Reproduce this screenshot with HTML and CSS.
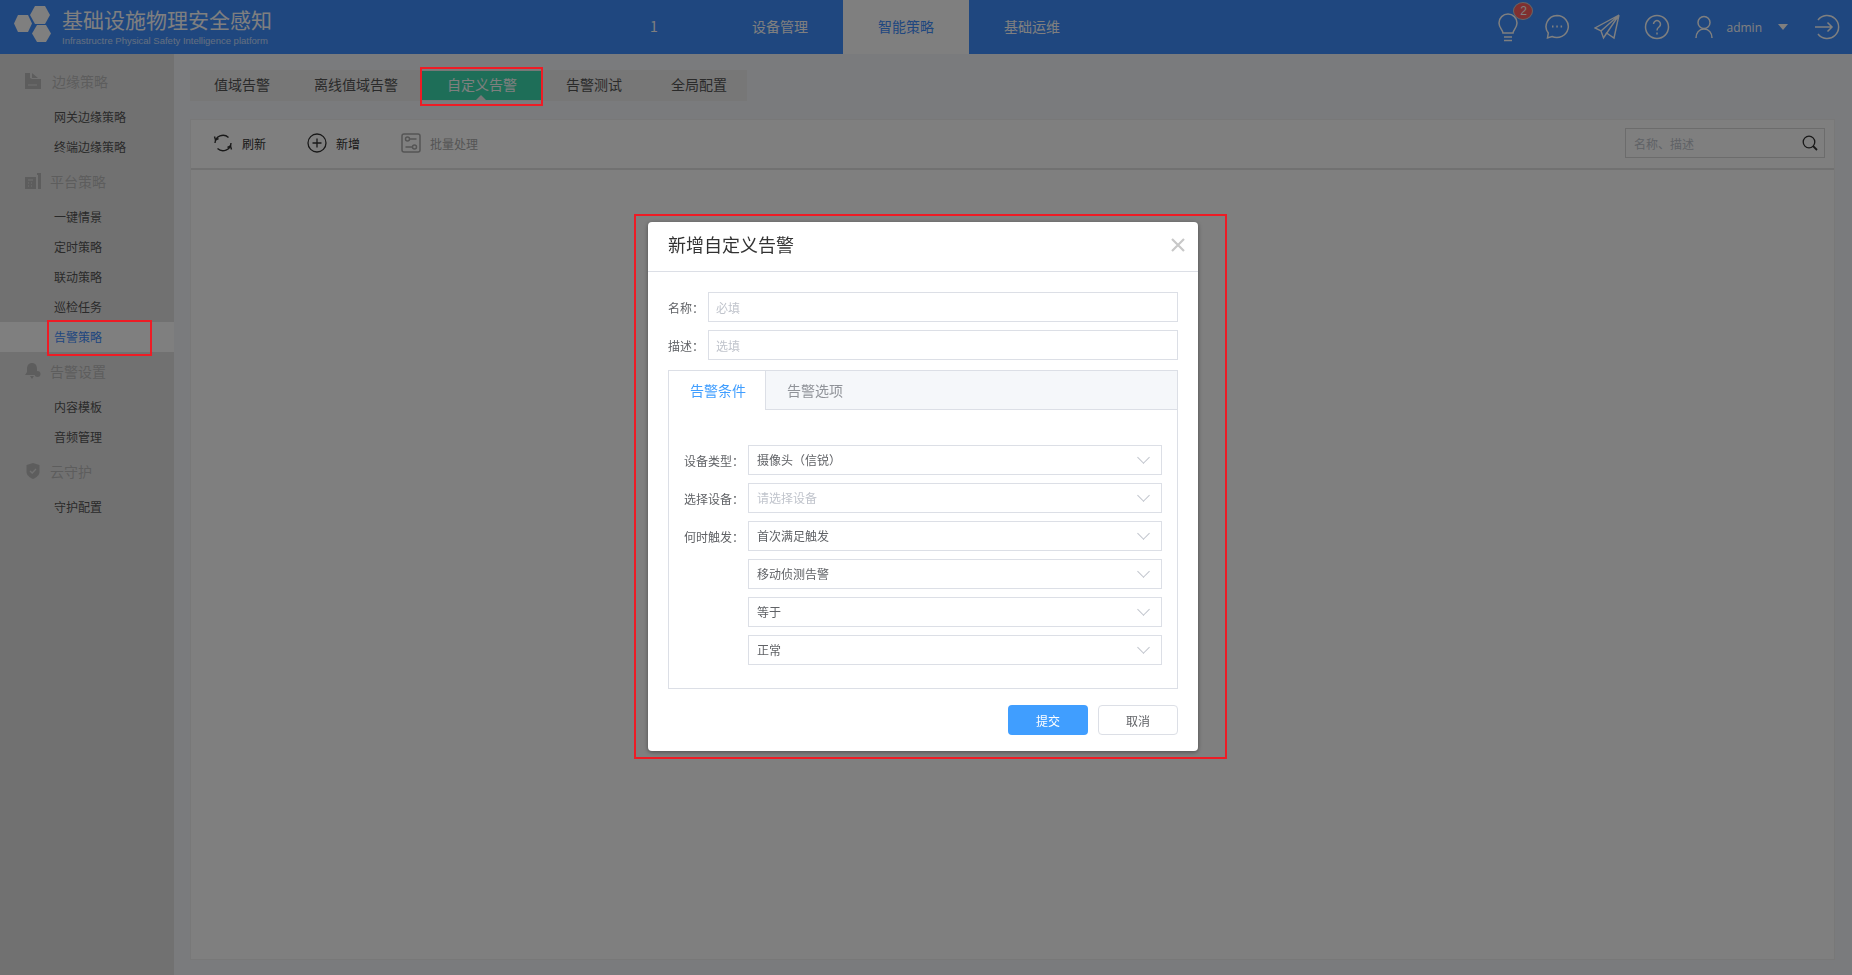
FILE: index.html
```html
<!DOCTYPE html>
<html lang="zh-CN">

    <head>
        <meta charset="UTF-8">
        <title>基础设施物理安全感知</title>
        <link rel="stylesheet" href="styles.css">
    </head>

    <body>
        <header class="top-bar">
            <div class="brand">
                <svg class="brand-logo" width="40" height="40" viewBox="0 0 40 40">
                    <path d="M22 2h10l5 9-5 9H22l-5-9z" fill="#fff"/>
                    <path d="M5 11h10l4 8.500-4 8.500H5l-4-8.500z" fill="#fff"/>
                    <path d="M24 21h9l5 8.500-5 8.500h-9l-5-8.500z" fill="#fff"/>
                </svg>
                <div>
                    <div class="brand-title">基础设施物理安全感知</div>
                    <div class="brand-sub">Infrastructre Physical Safety Intelligence platform</div>
                </div>
            </div>
            <nav class="main-nav">
                <a>1</a>
                <a>设备管理</a>
                <a class="active">智能策略</a>
                <a>基础运维</a>
            </nav>
            <div class="top-tools">
                <span class="tool tool-bulb">
                    <svg width="24" height="30" viewBox="0 0 24 30" fill="none" stroke="#fff" stroke-width="1.5">
                        <path d="M7 21c0-3-4-5-4-10a9 9 0 0 1 18 0c0 5-4 7-4 10z"/>
                        <path d="M8 25h8M8 28.500h8"/>
                    </svg>
                    <b class="badge">2</b>
                </span>
                <span class="tool">
                    <svg width="26" height="26" viewBox="0 0 26 26" fill="none" stroke="#fff" stroke-width="1.500">
                        <path d="M13 1.500a11.500 11 0 1 1-5 21l-4.500 1.500 .8-5A11.500 11 0 0 1 13 1.500z"/>
                        <path d="M8 12.500h1.500M12.300 12.500h1.500M16.600 12.500h1.500" stroke-width="2"/>
                    </svg>
                </span>
                <span class="tool">
                    <svg width="26" height="26" viewBox="0 0 26 26" fill="none" stroke="#fff" stroke-width="1.400">
                        <path d="M25 1L1 14l6 3zM25 1L7 17l2.500 7zM25 1l-5 23-7.500-5-3 5"/>
                    </svg>
                </span>
                <span class="tool">
                    <svg width="26" height="26" viewBox="0 0 26 26" fill="none" stroke="#fff" stroke-width="1.500">
                        <circle cx="13" cy="13" r="11.500"/>
                        <path d="M9.500 10a3.500 3.500 0 1 1 5.500 3c-1.400 1-2 1.500-2 3.500"/>
                        <path d="M13 18.500v2"/>
                    </svg>
                </span>
                <span class="tool tool-user">
                    <svg width="18" height="24" viewBox="0 0 18 24" fill="none" stroke="#fff" stroke-width="1.500">
                        <circle cx="9" cy="7.500" r="6"/>
                        <path d="M1 23c0-5 3-9 8-9s8 4 8 9"/>
                    </svg>
                </span>
                <span class="user-name">admin</span>
                <i class="user-caret"></i>
                <span class="tool tool-logout">
                    <svg width="26" height="26" viewBox="0 0 26 26" fill="none" stroke="#fff" stroke-width="1.500">
                        <path d="M3 6a11.500 11.500 0 1 1 0 14"/>
                        <path d="M0 13h17M12.500 8.500L17 13l-4.500 4.500"/>
                    </svg>
                </span>
            </div>
        </header>

        <div class="layout">
            <aside class="side-menu">
                <div class="menu-group">
                    <svg width="16" height="16" viewBox="0 0 16 16"><path d="M0 0h5v5l2 1h9v10H0zM7 0l6 5H7z" fill="#bbb"/><path d="M3 12h9" stroke="#e3e3e3"/></svg>
                    <span class="first-group">边缘策略</span>
                </div>
                <a class="menu-item">网关边缘策略</a>
                <a class="menu-item">终端边缘策略</a>
                <div class="menu-group">
                    <svg width="16" height="16" viewBox="0 0 16 16"><path d="M0 4h11v12H0z" fill="#bbb"/><path d="M12 2V0h4v16h-3V2z" fill="#bbb"/><path d="M3 7h5M3 10h1M6 10h1M3 13h1M6 13h1" stroke="#e3e3e3"/></svg>
                    <span>平台策略</span>
                </div>
                <a class="menu-item">一键情景</a>
                <a class="menu-item">定时策略</a>
                <a class="menu-item">联动策略</a>
                <a class="menu-item">巡检任务</a>
                <a class="menu-item active">告警策略</a>
                <div class="menu-group">
                    <svg width="16" height="16" viewBox="0 0 16 16"><path d="M7 0c3 0 5 2 5 6v3l2 3H0l2-3V6c0-4 2-6 5-6zM5 13h4l-2 3z" fill="#bbb"/><circle cx="12.500" cy="11" r="3" fill="#bbb"/></svg>
                    <span>告警设置</span>
                </div>
                <a class="menu-item">内容模板</a>
                <a class="menu-item">音频管理</a>
                <div class="menu-group">
                    <svg width="16" height="16" viewBox="0 0 16 16"><path d="M8 0l6.500 2v7c0 3-3 5.500-6.500 7-3.500-1.500-6.500-4-6.500-7V2z" fill="#bbb"/><path d="M5 8l2.200 2L11 6" stroke="#e3e3e3" stroke-width="1.300" fill="none"/></svg>
                    <span>云守护</span>
                </div>
                <a class="menu-item">守护配置</a>
            </aside>

            <main class="content">
                <div class="sub-tabs">
                    <a>值域告警</a>
                    <a class="tight">离线值域告警</a>
                    <a class="active">自定义告警</a>
                    <a>告警测试</a>
                    <a>全局配置</a>
                </div>
                <section class="card">
                    <div class="toolbar">
                        <a class="tool-btn">
                            <svg width="20" height="20" viewBox="0 0 20 20" fill="none" stroke="#333" stroke-width="1.400">
                                <path d="M2 10a8 8 0 0 1 13.500-5.500M18 10a8 8 0 0 1-13.500 5.500"/>
                                <path d="M1.500 3.500l1 3.500 3-1.500M18.500 16.500l-1-3.500-3 1.500"/>
                            </svg>
                            刷新
                        </a>
                        <a class="tool-btn">
                            <svg width="20" height="20" viewBox="0 0 20 20" fill="none" stroke="#333" stroke-width="1.300">
                                <circle cx="10" cy="10" r="9"/>
                                <path d="M10 5.500v9M5.500 10h9"/>
                            </svg>
                            新增
                        </a>
                        <a class="tool-btn disabled">
                            <svg width="20" height="20" viewBox="0 0 20 20" fill="none" stroke="#aaa" stroke-width="1.500">
                                <rect x="1" y="1" width="18" height="18" rx="2"/>
                                <circle cx="6.500" cy="6" r="2"/>
                                <circle cx="13.500" cy="14" r="2"/>
                                <path d="M8.500 6h7M4.500 14h7"/>
                            </svg>
                            批量处理
                        </a>
                        <div class="search-box">
                            <input type="text" placeholder="名称、描述">
                            <svg width="16" height="16" viewBox="0 0 16 16" fill="none" stroke="#333" stroke-width="1.300">
                                <circle cx="7" cy="7" r="5.800"/>
                                <path d="M11 11l4 4" stroke-width="1.800"/>
                            </svg>
                        </div>
                    </div>
                </section>
            </main>
        </div>

        <div class="mask"></div>

        <div class="dialog">
            <div class="dialog-head">
                <span>新增自定义告警</span>
                <svg width="14" height="14" viewBox="0 0 14 14" stroke="#c8c8c8" stroke-width="2.200"><path d="M1 1l12 12M13 1L1 13"/></svg>
            </div>
            <div class="dialog-body">
                <div class="form-row">
                    <label>名称：</label>
                    <input type="text" placeholder="必填">
                </div>
                <div class="form-row">
                    <label>描述：</label>
                    <input type="text" placeholder="选填">
                </div>
                <div class="tab-box">
                    <div class="tab-head">
                        <a class="active">告警条件</a>
                        <a>告警选项</a>
                    </div>
                    <div class="tab-pane">
                        <div class="form-row">
                            <label>设备类型：</label>
                            <div class="select">摄像头（信锐）<i class="chevron"></i></div>
                        </div>
                        <div class="form-row">
                            <label>选择设备：</label>
                            <div class="select empty">请选择设备<i class="chevron"></i></div>
                        </div>
                        <div class="form-row">
                            <label>何时触发：</label>
                            <div class="select">首次满足触发<i class="chevron"></i></div>
                        </div>
                        <div class="form-row">
                            <label></label>
                            <div class="select">移动侦测告警<i class="chevron"></i></div>
                        </div>
                        <div class="form-row">
                            <label></label>
                            <div class="select">等于<i class="chevron"></i></div>
                        </div>
                        <div class="form-row">
                            <label></label>
                            <div class="select">正常<i class="chevron"></i></div>
                        </div>
                    </div>
                </div>
                <div class="dialog-foot">
                    <button class="btn-primary">提交</button>
                    <button class="btn-plain">取消</button>
                </div>
            </div>
        </div>

        <!-- red marks drawn on the screenshot -->
        <div class="mark mark-menu"></div>
        <div class="mark mark-tab"></div>
        <div class="mark mark-dialog"></div>
    </body>

</html>
```

FILE: styles.css
```css
* {
    box-sizing: border-box;
}

body {
    margin: 0;
    height: 975px;
    overflow: hidden;
    background-color: #f5f7fb;
    font-family: "Noto Sans CJK SC", "Liberation Sans", sans-serif;
    font-size: 12px;
    color: #555;
}

a {
    display: block;
}

/* top bar */
.top-bar {
    display: flex;
    height: 54px;
    background-color: #3e8eff;
    color: #fff;
}

.brand {
    display: flex;
    width: 591px;
    padding: 4px 0 0 13px;
}

.brand-logo {
    margin-right: 9px;
}

.brand-title {
    font-size: 21px;
    line-height: 30px;
}

.brand-sub {
    font-family: "Liberation Sans", sans-serif;
    font-size: 9.500px;
    line-height: 14px;
    opacity: .7;
}

.main-nav {
    display: flex;
}

.main-nav a {
    width: 126px;
    line-height: 52px;
    text-align: center;
    font-size: 14px;
}

.main-nav a.active {
    background-color: #fff;
    color: #3e8eff;
}

.top-tools {
    display: flex;
    align-items: center;
    margin-left: auto;
    padding-right: 11px;
}

.tool {
    position: relative;
    display: flex;
    margin-left: 24px;
}

.tool svg {
    display: block;
}

.tool-user {
    margin-left: 25px;
}

.badge {
    position: absolute;
    top: -10px;
    left: 17px;
    width: 20px;
    height: 18px;
    border: 1px solid #ccc;
    border-radius: 50%;
    background-color: #ff6060;
    font-family: "Liberation Sans", sans-serif;
    font-size: 12px;
    font-weight: normal;
    line-height: 16px;
    text-align: center;
}

.user-name {
    margin-left: 13px;
    font-family: "Open Sans", sans-serif;
    font-size: 12px;
}

.user-caret {
    width: 0;
    height: 0;
    margin-left: 16px;
    border-left: 5px solid transparent;
    border-right: 5px solid transparent;
    border-top: 6px solid #fff;
}

.tool-logout {
    margin-left: 27px;
}

/* left menu and content */
.layout {
    display: flex;
    height: 921px;
}

.side-menu {
    width: 174px;
    padding-top: 8px;
    background-color: #e3e3e3;
}

.menu-group {
    display: flex;
    align-items: center;
    height: 40px;
    padding: 0 0 2px 25px;
    font-size: 14px;
    color: #bbb;
}

.menu-group span {
    margin-left: 9px;
}

.menu-group .first-group {
    margin-left: 11px;
}

.menu-item {
    height: 30px;
    padding-left: 54px;
    line-height: 29px;
}

.menu-item.active {
    background-color: #fff;
    color: #3e8eff;
}

.content {
    flex: 1;
    padding: 16px 17px 18px 16px;
}

.sub-tabs {
    display: flex;
    width: 557px;
    height: 31px;
    background-color: #eee;
    font-size: 14px;
    white-space: nowrap;
}

.sub-tabs a {
    flex: none;
    padding: 0 24px;
    line-height: 28px;
}

.sub-tabs a.tight {
    margin-left: -5px;
    padding: 0 23px 0 25px;
}

.sub-tabs a.active {
    position: relative;
    width: 120px;
    height: 29px;
    margin: 1px 0 0 0;
    padding: 0 24px 0 26px;
    background-color: #3ddcb0;
    color: #fff;
    line-height: 26px;
}

.sub-tabs a.active ~ a {
    padding-left: 25px;
}

.sub-tabs a.active::after {
    content: "";
    position: absolute;
    left: 55px;
    bottom: 0;
    border-left: 5px solid transparent;
    border-right: 5px solid transparent;
    border-bottom: 5px solid #eee;
}

.card {
    height: 841px;
    margin-top: 18px;
    border: 1px solid #f0f0f0;
    background-color: #fff;
}

.toolbar {
    display: flex;
    align-items: center;
    height: 50px;
    padding: 0 0 2px 22px;
    border-bottom: 2px solid #e2e2e2;
}

.tool-btn {
    display: flex;
    align-items: center;
    margin-right: 41px;
    color: #333;
}

.tool-btn svg {
    margin-right: 9px;
}

.tool-btn.disabled {
    color: #aaa;
}

.search-box {
    display: flex;
    align-items: center;
    width: 200px;
    height: 30px;
    margin-left: auto;
    margin-right: 9px;
    padding-right: 6px;
    border: 1px solid #d8d8d8;
}

.search-box input {
    flex: 1;
    width: 100%;
    border: 0;
    outline: 0;
    padding: 0 8px;
    font: inherit;
    background: transparent;
}

input::placeholder {
    color: #c0c4cc;
    opacity: 1;
}

/* dialog */
.mask {
    position: fixed;
    top: 0;
    left: 0;
    right: 0;
    bottom: 0;
    background-color: rgba(0, 0, 0, .5);
}

.dialog {
    position: absolute;
    left: 648px;
    top: 222px;
    width: 550px;
    height: 529px;
    border-radius: 4px;
    background-color: #fff;
    box-shadow: 0 1px 4px rgba(0, 0, 0, .4);
    color: #606266;
}

.dialog-head {
    display: flex;
    align-items: center;
    justify-content: space-between;
    height: 50px;
    padding: 0 13px 6px 20px;
    border-bottom: 1px solid #dcdfe6;
    font-size: 18px;
    color: #333;
}

.dialog-head svg {
    margin-top: 2px;
}

.dialog-body {
    padding: 20px 20px 16px;
}

.form-row {
    display: flex;
    align-items: center;
    margin-bottom: 8px;
}

.form-row label {
    flex: none;
    width: 40px;
}

.form-row input {
    flex: 1;
    height: 30px;
    padding: 0 7px;
    border: 1px solid #dcdfe6;
    outline: 0;
    font: inherit;
}

.tab-box {
    margin-top: 10px;
    border: 1px solid #dcdfe6;
}

.tab-head {
    display: flex;
    height: 39px;
    background-color: #f5f7fa;
    border-bottom: 1px solid #dcdfe6;
    font-size: 14px;
    color: #909399;
}

.tab-head a {
    width: 97px;
    padding-left: 21px;
    line-height: 38px;
}

.tab-head a.active {
    height: 39px;
    border-right: 1px solid #dcdfe6;
    background-color: #fff;
    color: #409eff;
}

.tab-pane {
    padding: 35px 15px 15px;
}

.tab-pane label {
    width: 64px;
}

.select {
    position: relative;
    flex: 1;
    height: 30px;
    padding-left: 8px;
    border: 1px solid #dcdfe6;
    line-height: 28px;
}

.select.empty {
    color: #c0c4cc;
}

.chevron {
    position: absolute;
    right: 13px;
    top: 7px;
    width: 9px;
    height: 9px;
    border-right: 1px solid #c0c4cc;
    border-bottom: 1px solid #c0c4cc;
    transform: rotate(45deg);
}

.dialog-foot {
    display: flex;
    justify-content: flex-end;
    gap: 10px;
    margin-top: 16px;
}

.dialog-foot button {
    width: 80px;
    height: 30px;
    border-radius: 4px;
    font: inherit;
}

.btn-primary {
    border: 0;
    background-color: #409eff;
    color: #fff;
}

.btn-plain {
    border: 1px solid #dcdfe6;
    background-color: #fff;
    color: #606266;
}

/* red marks */
.mark {
    position: absolute;
    border: 2px solid #ee1c25;
}

.mark-menu {
    left: 47px;
    top: 320px;
    width: 105px;
    height: 36px;
}

.mark-tab {
    left: 420px;
    top: 67px;
    width: 123px;
    height: 39px;
}

.mark-dialog {
    left: 634px;
    top: 214px;
    width: 593px;
    height: 545px;
}
```
